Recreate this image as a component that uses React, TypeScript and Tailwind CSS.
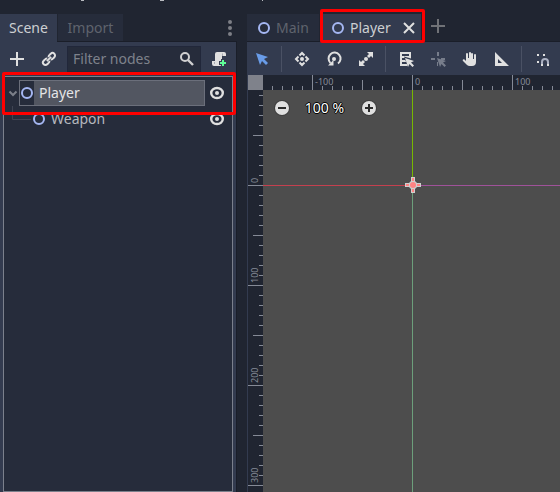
import React, { useLayoutEffect, useRef, useState } from "react";

function Icon({ children, className = "" }: { children: React.ReactNode; className?: string }) {
  return (
    <svg width="16" height="16" viewBox="0 0 16 16" aria-hidden="true" className={`shrink-0 ${className}`}>
      {children}
    </svg>
  );
}

function NodeIcon({ className = "" }: { className?: string }) {
  return (
    <Icon className={className}>
      <circle cx="8" cy="8" r="5" fill="none" stroke="#a5b7f3" strokeWidth="2" />
    </Icon>
  );
}

function EyeIcon() {
  return (
    <Icon>
      <ellipse cx="8" cy="8" rx="5.800" ry="5" fill="none" stroke="#e0e0e0" strokeWidth="2.400" />
      <circle cx="8" cy="8" r="2" fill="#e0e0e0" />
    </Icon>
  );
}

function ToolButton({ label, children }: { label: string; children: React.ReactNode }) {
  return (
    <button type="button" aria-label={label} className="flex h-7 w-7 shrink-0 items-center justify-center">
      {children}
    </button>
  );
}

function Separator() {
  return (
    <div className="h-[26px] w-1 shrink-0 pl-px">
      <div className="h-full w-px bg-[#4a5164]" />
    </div>
  );
}

function ScenePanel() {
  return (
    <aside className="flex w-[237px] shrink-0 flex-col">
      <div className="flex h-[27px] items-start">
        <button type="button" className="relative h-7 w-[57px] bg-[#333b4f] text-[#cdcfd2]">
          Scene
        </button>
        <button type="button" className="ml-px h-[27px] w-[65px] bg-[#262c3b] text-[#5f636d]">
          Import
        </button>
        <button type="button" aria-label="Dock options" className="ml-auto flex h-[27px] w-[15px] items-center">
          <svg width="4" height="16" viewBox="0 0 4 16" aria-hidden="true" fill="#7d7f86" className="ml-[6px]">
            <circle cx="2" cy="2" r="2" />
            <circle cx="2" cy="8" r="2" />
            <circle cx="2" cy="14" r="2" />
          </svg>
        </button>
      </div>
      <div className="flex min-h-0 flex-1 flex-col border-t border-r border-[#1a1e29] bg-[#333b4f] px-[3px]">
        <div className="flex h-[34px] shrink-0 items-center gap-1">
          <ToolButton label="Add node">
            <Icon>
              <path d="M7 1h2v6h6v2H9v6H7V9H1V7h6z" fill="#e0e0e0" />
            </Icon>
          </ToolButton>
          <ToolButton label="Instance scene">
            <Icon>
              <g transform="rotate(-45 8 8)" fill="none" stroke="#e0e0e0" strokeWidth="2">
                <path d="M7 6.500A2.500 2.500 0 0 0 4.500 5.500H3a2.500 2.500 0 0 0 0 5h1.500A2.500 2.500 0 0 0 7 9.500" />
                <path d="M9 9.500a2.500 2.500 0 0 0 2.500 1H13a2.500 2.500 0 0 0 0-5h-1.500A2.500 2.500 0 0 0 9 6.500" />
                <path d="M5 8h6" />
              </g>
            </Icon>
          </ToolButton>
          <div className="flex h-[26px] min-w-0 flex-1 items-center border border-[#21273a] bg-[#262c3b] px-[5px]">
            <input
              type="text"
              aria-label="Filter nodes"
              placeholder="Filter nodes"
              className="w-full min-w-0 bg-transparent text-[#cdcfd2] outline-none placeholder:text-[#7e828b]"
            />
            <Icon>
              <circle cx="6" cy="6" r="4" fill="none" stroke="#cfcfd0" strokeWidth="2" />
              <path d="m9 9 5 5" stroke="#cfcfd0" strokeWidth="2.400" />
            </Icon>
          </div>
          <ToolButton label="Attach script">
            <Icon>
              <path
                d="M6 1a2 2 0 0 0-2 2v7H1v3a2 2 0 0 0 2 2h6a2 2 0 0 0 2-2V5h4V3a2 2 0 0 0-2-2z"
                fill="#e0e0e0"
              />
              <path d="M11.500 2.500V5M3.500 11v2" fill="none" stroke="#a9abb2" strokeWidth="1" />
              <path d="M10 8h4v2h2v4h-2v2h-4v-2H8v-4h2z" fill="#333b4f" />
              <path d="M11 9h2v2h2v2h-2v2h-2v-2H9v-2h2z" fill="#5fff97" />
            </Icon>
          </ToolButton>
        </div>

        <div className="relative min-h-0 w-full flex-1 border border-[#7b808c] bg-[#262c3b] pt-[3px]">
          <div className="flex h-[26px] items-center pr-[7px]">
            <svg width="15" height="16" viewBox="0 0 15 16" aria-hidden="true" className="shrink-0">
              <path d="m5.500 6.500 3.500 3.500 3.500-3.500" fill="none" stroke="#7b7f89" strokeWidth="2" />
            </svg>
            <div className="flex h-[26px] flex-1 items-center border border-[#6b6f7b] bg-[#525661]">
              <span className="flex h-full w-[14px] items-center justify-center bg-[#262c3b]">
                <NodeIcon />
              </span>
              <span className="pl-[5px] text-[#e4e5e7]">Player</span>
            </div>
            <button type="button" aria-label="Toggle Player visibility" className="ml-1">
              <EyeIcon />
            </button>
          </div>
          <div className="flex h-[26px] items-center pr-[7px]">
            <svg width="27" height="26" viewBox="0 0 27 26" aria-hidden="true" className="shrink-0">
              <path d="M8.500 0v13.500H27" fill="none" stroke="#3f4453" />
            </svg>
            <NodeIcon />
            <span className="flex-1 pl-1 text-[#b5b7bd]">Weapon</span>
            <button type="button" aria-label="Toggle Weapon visibility">
              <EyeIcon />
            </button>
          </div>
          <div className="pointer-events-none absolute -top-[5px] -right-1 -left-[2px] h-[43px] rounded-[2px] border-[3px] border-[#fe0000]" />
        </div>
      </div>
    </aside>
  );
}

function EditorTabs() {
  return (
    <div className="flex h-[27px] shrink-0">
      <button type="button" className="flex h-[27px] w-[72px] items-center bg-[#262c3b] pl-[9px] text-[#5f636d]">
        <NodeIcon />
        <span className="pl-1">Main</span>
      </button>
      <div className="relative ml-[2px] flex h-7 w-[100px] items-center bg-[#333b4f] pl-[9px] text-[#cdcfd2]">
        <button type="button" className="flex items-center">
          <NodeIcon />
          <span className="pl-1">Player</span>
        </button>
        <button type="button" aria-label="Close tab" className="ml-auto pr-1">
          <Icon>
            <path d="m3 3 10 10M13 3 3 13" stroke="#e0e0e0" strokeWidth="2" />
          </Icon>
        </button>
        <div className="pointer-events-none absolute -top-[5px] -right-1 -bottom-px -left-px rounded-[2px] border-[3px] border-[#fe0000]" />
      </div>
      <button type="button" aria-label="New scene" className="ml-[9px] flex h-6 w-4 items-center">
        <Icon>
          <path d="M7 1h2v6h6v2H9v6H7V9H1V7h6z" fill="#707277" />
        </Icon>
      </button>
    </div>
  );
}

function CanvasToolbar() {
  return (
    <div className="flex h-[33px] shrink-0 items-center gap-1 overflow-hidden pl-px">
      <ToolButton label="Select">
        <Icon>
          <path d="m2 2 4 12 2-4 4 4 2-2-4-4 4-2z" fill="#699ce8" />
        </Icon>
      </ToolButton>
      <Separator />
      <ToolButton label="Move">
        <Icon>
          <circle cx="8" cy="8" r="2" fill="#e0e0e0" />
          <path
            d="M5.500 4.500 8 2l2.500 2.500M5.500 11.500 8 14l2.500-2.500M4.500 5.500 2 8l2.500 2.500M11.500 5.500 14 8l-2.500 2.500"
            fill="none"
            stroke="#e0e0e0"
            strokeWidth="2"
          />
        </Icon>
      </ToolButton>
      <ToolButton label="Rotate">
        <Icon>
          <path d="M4.500 12A6 6 0 1 1 12 12.500" fill="none" stroke="#e0e0e0" strokeWidth="2" />
          <circle cx="8" cy="8" r="2" fill="#e0e0e0" />
          <path d="M2 14.500h5.500V9z" fill="#e0e0e0" />
        </Icon>
      </ToolButton>
      <ToolButton label="Scale">
        <Icon>
          <g fill="#e0e0e0">
            <path d="M9 1h6v6l-2-2-2 2-2-2 2-2zM7 15H1V9l2 2 2-2 2 2-2 2z" />
            <circle cx="8" cy="8" r="2" />
          </g>
        </Icon>
      </ToolButton>
      <Separator />
      <ToolButton label="List select">
        <Icon>
          <path d="M2 1h11v14H2z" fill="#e0e0e0" />
          <path d="M4 3h7v2H4zM4 7h7v2H4zM4 11h7v2H4z" fill="#333b4f" />
          <path d="M6 5.500 10 16h6V9l-3-1.500z" fill="#333b4f" />
          <path d="m7 7 3 9 1.500-3 3 3 1.500-1.500-3-3 3-1.500z" fill="#e0e0e0" />
        </Icon>
      </ToolButton>
      <ToolButton label="Change pivot">
        <Icon>
          <g fill="#777d8b">
            <path d="M7 1h2v4H7zM1 7h4v2H1zM11 7h4v2h-4zM7 11h1v4H7z" />
            <path d="m7 7 3 9 1.500-3 3 3 1.500-1.500-3-3 3-1.500z" />
          </g>
        </Icon>
      </ToolButton>
      <ToolButton label="Pan">
        <Icon>
          <path
            d="M8 1a1 1 0 0 0-1 1v5H6V3a1 1 0 0 0-2 0v7L2.500 8.500A1 1 0 0 0 1 10l4 4a4 4 0 0 0 3 1h2a4 4 0 0 0 4-4V4a1 1 0 0 0-2 0v4h-1V3a1 1 0 0 0-2 0v4H9V2a1 1 0 0 0-1-1z"
            fill="#e0e0e0"
          />
        </Icon>
      </ToolButton>
      <ToolButton label="Ruler">
        <Icon>
          <path d="M1 1v14h14zm3 7 4 4H4z" fill="#e0e0e0" fillRule="evenodd" />
        </Icon>
      </ToolButton>
      <Separator />
      <ToolButton label="Smart snap">
        <Icon>
          <path d="M3 3h2v2H3zM9 3h2v2H9zM3 10h2v2H3z" fill="#e0e0e0" />
          <path d="M8 14v-3a3 3 0 0 1 6 0v3" fill="none" stroke="#abb0c2" strokeWidth="2" />
          <path d="M7 13h2v2H7zM13 13h2v2h-2z" fill="#e0e0e0" />
        </Icon>
      </ToolButton>
    </div>
  );
}

const tickLength = (step: number) => (step % 10 === 0 ? 15 : step % 5 === 0 ? 10 : 4);

// All ruler steps, ten pixels apart, that fall inside a ruler of the given length.
function visibleSteps(origin: number, length: number) {
  const first = -Math.floor(origin / 10);
  const last = Math.floor((length - origin) / 10);
  return Array.from({ length: Math.max(0, last - first + 1) }, (_, i) => first + i);
}

function useSize() {
  const ref = useRef<HTMLDivElement>(null);
  const [size, setSize] = useState({ width: 0, height: 0 });
  useLayoutEffect(() => {
    const element = ref.current;
    if (!element) return;
    const measure = () => setSize({ width: element.clientWidth, height: element.clientHeight });
    measure();
    const observer = new ResizeObserver(measure);
    observer.observe(element);
    return () => observer.disconnect();
  }, []);
  return { ref, ...size };
}

function HorizontalRuler() {
  const { ref, width } = useSize();
  const origin = 149;
  return (
    <div ref={ref} className="min-w-0 flex-1 overflow-hidden bg-[#202531] font-['Noto_Sans'] text-[9px]">
      <svg height="15" className="block w-full" fill="#858a96">
        {visibleSteps(origin, width).map((step) => {
          const x = origin + step * 10;
          const length = tickLength(step);
          return (
            <g key={step}>
              <rect x={x} y={15 - length} width="1" height={length} />
              {step % 10 === 0 && x + 24 < width && (
                <text x={x + 3} y="10">
                  {step * 10}
                </text>
              )}
            </g>
          );
        })}
      </svg>
    </div>
  );
}

function VerticalRuler() {
  const { ref, height } = useSize();
  const origin = 95;
  return (
    <div ref={ref} className="w-[15px] shrink-0 overflow-hidden bg-[#202531] font-['Noto_Sans'] text-[9px]">
      <svg width="15" className="block h-full" fill="#858a96">
        {visibleSteps(origin, height).map((step) => {
          const y = origin + step * 10;
          const length = tickLength(step);
          return (
            <g key={step}>
              <rect x={15 - length} y={y} width={length} height="1" />
              {step % 10 === 0 && y > 24 && (
                <text transform={`translate(10 ${y - 2}) rotate(-90)`}>{step * 10}</text>
              )}
            </g>
          );
        })}
      </svg>
    </div>
  );
}

function Viewport() {
  return (
    <div className="relative min-w-0 flex-1 overflow-hidden bg-[#4d4d4d]">
      <div className="absolute top-[95px] left-0 h-px w-[149px] bg-[#c4404f]" />
      <div className="absolute top-[95px] right-0 left-[149px] h-px bg-[#a0529a]" />
      <div className="absolute top-0 left-[149px] h-[95px] w-px bg-[#77b800]" />
      <div className="absolute top-[95px] bottom-0 left-[149px] w-px bg-[#6c9f7b]" />
      <svg width="16" height="16" viewBox="0 0 16 16" aria-hidden="true" className="absolute top-[87px] left-[142px]">
        <path d="M6 0h4v4l2 2h4v4h-4l-2 2v4H6v-4l-2-2H0V6h4l2-2z" fill="#cfcfcf" />
        <circle cx="8" cy="8" r="3" fill="#ff8484" />
        <path d="M7 1h2v3H7zM7 12h2v3H7zM1 7h3v2H1zM12 7h3v2h-3z" fill="#ff8484" />
      </svg>
      <div className="relative flex items-center pt-2 pl-[11px]">
        <button type="button" aria-label="Zoom out">
          <Icon>
            <circle cx="8" cy="8" r="8" fill="#3f3f3f" />
            <circle cx="8" cy="8" r="7" fill="#e0e0e0" />
            <path d="M4 7h8v2H4z" fill="#2b2b2b" />
          </Icon>
        </button>
        <button
          type="button"
          className="w-[71px] pr-0.5 text-center text-white [text-shadow:1px_0_#000,-1px_0_#000,0_1px_#000,0_-1px_#000]"
        >
          100 %
        </button>
        <button type="button" aria-label="Zoom in">
          <Icon>
            <circle cx="8" cy="8" r="8" fill="#3f3f3f" />
            <circle cx="8" cy="8" r="7" fill="#e0e0e0" />
            <path d="M7 4h2v3h3v2H9v3H7V9H4V7h3z" fill="#2b2b2b" />
          </Icon>
        </button>
      </div>
    </div>
  );
}

export default function App() {
  return (
    <div className="flex h-screen flex-col overflow-hidden bg-[#202531] font-['Noto_Sans',sans-serif] text-sm">
      <header className="h-[14px] shrink-0">
        <svg width="270" height="2" aria-hidden="true" className="block" fill="#b9bbc0">
          <rect x="81" width="3" height="1" />
          <rect x="160" width="4" height="1" />
          <rect x="262" width="1" height="1" />
        </svg>
      </header>
      <div className="flex min-h-0 flex-1 gap-[10px]">
        <ScenePanel />
        <main className="flex min-w-0 flex-1 flex-col">
          <EditorTabs />
          <div className="flex min-h-0 flex-1 flex-col border-t border-[#1a1e29] bg-[#333b4f]">
            <CanvasToolbar />
            <div className="flex min-h-0 flex-1 flex-col pl-px">
              <div className="flex shrink-0">
                <div className="h-[15px] w-[15px] shrink-0 bg-[#7f828b]" />
                <HorizontalRuler />
              </div>
              <div className="flex min-h-0 flex-1">
                <VerticalRuler />
                <Viewport />
              </div>
            </div>
          </div>
        </main>
      </div>
    </div>
  );
}
